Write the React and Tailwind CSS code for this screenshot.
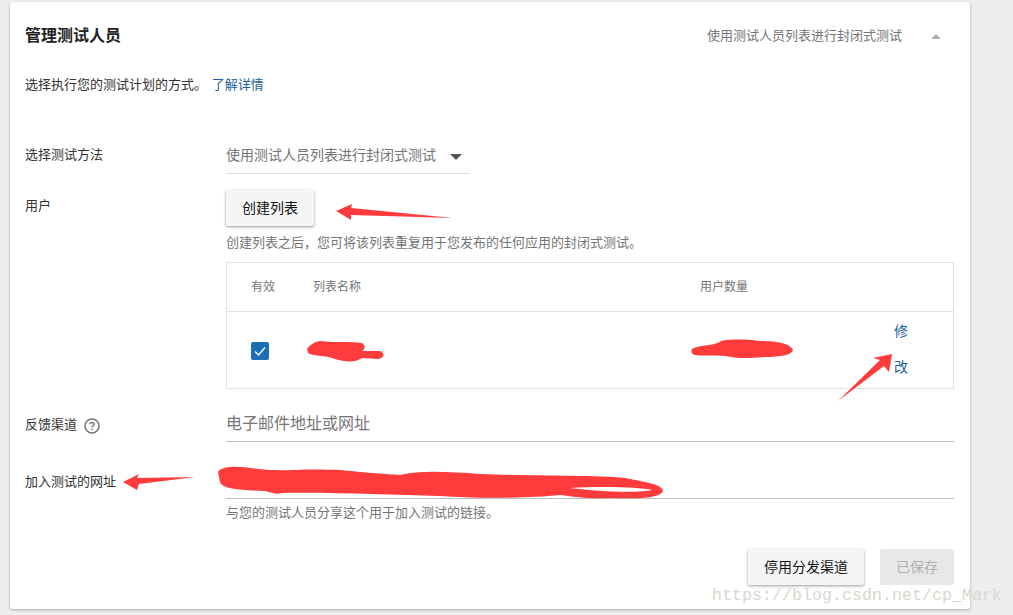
const cjk = { fontFamily: '"Liberation Sans", "Noto Sans CJK SC", sans-serif' }

function Label({ children, className = '' }) {
  return <div className={`w-[201px] shrink-0 text-[13px] text-[#333] ${className}`}>{children}</div>
}

function Marks() {
  return (
    <svg className="absolute left-0 top-0 pointer-events-none" width="1013" height="615" viewBox="0 0 1013 615">
      {/* arrows */}
      <path d="M336 211 L352 204 L351 208 L453 218 L351 215 L351 220 Z" fill="#ff3b3b" />
      <path d="M838 401 L880 360 L873 358 L892 354 L889 372 L884 366 Z" fill="#ff3b3b" />
      <path d="M123 482 L139 474 L137 478 L195 477 L139 484 L137 490 Z" fill="#ff3b3b" />
      {/* scribbles */}
      <path d="M307 349 C310 345 314 342 320 341 C335 343 350 341 362 343 C366 346 365 349 362 351 L380 351 C386 354 384 358 378 359 L362 358 C355 363 345 362 335 359 C325 355 312 356 308 353 Z" fill="#ff3b3b" />
      <path d="M692 349 C698 345 712 346 720 342 C722 339 745 339 760 341 C775 341 790 343 793 350 C792 355 780 357 765 357 C745 359 735 358 725 356 C712 355 700 356 695 355 C691 354 691 351 692 349 Z" fill="#ff3b3b" />
      <path d="M218 472 C222 465 240 466 258 469 C285 472 300 468 340 470 C370 473 385 474 400 475 C420 470 450 472 480 474 C530 476 590 475 625 478 C645 482 662 484 663 491 C660 498 640 499 610 498 C590 499 575 497 560 495 C530 498 480 499 440 496 C390 495 330 492 282 493 C275 495 270 492 265 491 C240 490 222 489 220 482 Z" fill="#ff3b3b" />
      <path d="M570 488 C600 486 640 487 652 490 C640 493 600 492 570 488 Z" fill="#ffffff" />
    </svg>
  )
}

export default function App() {
  return (
    <div className="relative w-[1013px] h-[615px] overflow-hidden bg-[#eeeeee]" style={cjk}>
      <div className="ml-[10px] mt-[2px] w-[960px] h-[607px] bg-white rounded-[2px] shadow-[0_1px_3px_rgba(0,0,0,0.3)] pl-[15px] pr-[16px] pt-[24px]">
        <div className="flex items-center justify-between h-[20px]">
          <h2 className="text-[16px] font-semibold text-[#222]">管理测试人员</h2>
          <div className="flex items-center">
            <span className="text-[13px] text-[#757575]">使用测试人员列表进行封闭式测试</span>
            <span className="ml-[29px] mr-[13px] w-0 h-0 border-x-[5px] border-x-transparent border-b-[5px] border-b-[#b0b0b0]" />
          </div>
        </div>

        <p className="mt-[29px] h-[20px] leading-[20px] text-[13px] text-[#333]">
          选择执行您的测试计划的方式。 <span className="ml-[1px] text-[#1c5f9c]">了解详情</span>
        </p>

        <div className="flex mt-[49px] h-[31px]">
          <Label className="pt-[1px] leading-[20px]">选择测试方法</Label>
          <div className="w-[244px] h-[30px] border-b border-[#e0e0e0] flex items-start pt-[1px] pr-[8px] justify-between">
            <span className="text-[14px] leading-[20px] text-[#757575]">使用测试人员列表进行封闭式测试</span>
            <span className="mt-[9px] w-0 h-0 border-x-[6px] border-x-transparent border-t-[6px] border-t-[#555]" />
          </div>
        </div>

        <div className="flex mt-[15px]">
          <Label className="pt-[6px] leading-[20px]">用户</Label>
          <div className="flex-1">
            <button className="w-[88px] h-[36px] rounded-[2px] bg-[#f5f5f5] text-[14px] text-[#111] shadow-[0_1px_3px_rgba(0,0,0,0.4)]">创建列表</button>
            <p className="mt-[7px] h-[20px] leading-[20px] text-[13px] text-[#757575]">创建列表之后，您可将该列表重复用于您发布的任何应用的封闭式测试。</p>
            <div className="mt-[9px] w-[728px] h-[127px] border border-[#e0e0e0]">
              <div className="flex items-center h-[49px] border-b border-[#e0e0e0] text-[12px] text-[#757575]">
                <span className="ml-[24px] w-[62px]">有效</span>
                <span className="w-[387px]">列表名称</span>
                <span>用户数量</span>
              </div>
              <div className="relative flex items-center h-[76px]">
                <span className="ml-[24px] mt-[2px] w-[18px] h-[18px] rounded-[2px] bg-[#1a6fb5] flex items-center justify-center">
                  <svg width="12" height="12" viewBox="0 0 12 12" fill="none" stroke="white" strokeWidth="1.4">
                    <path d="M1 6.5 L4.5 10 L11 2.5" />
                  </svg>
                </span>
                <div className="ml-auto mr-[45px] mb-[2px] w-[14px] text-[14px] leading-[36px] text-[#1c5f9c]">修改</div>
              </div>
            </div>
          </div>
        </div>

        <div className="flex mt-[18px] h-[35px]">
          <Label className="flex items-center h-[36px]">
            反馈渠道
            <svg className="ml-[7px] mt-[2px]" width="16" height="16" viewBox="0 0 16 16" fill="none" stroke="#757575" strokeWidth="1.5">
              <circle cx="8" cy="8" r="7" />
              <path d="M5.9 6.3 C5.9 3.8 10.1 3.8 10.1 6.2 C10.1 7.8 8 7.7 8 9.6" />
              <path d="M8 10.7 V12.2" />
            </svg>
          </Label>
          <div className="w-[728px] h-[35px] border-b border-[#bdbdbd] text-[16px] leading-[33px] text-[#757575]">电子邮件地址或网址</div>
        </div>

        <div className="flex mt-[22px]">
          <Label className="pt-[8px] leading-[20px]">加入测试的网址</Label>
          <div className="w-[728px]">
            <div className="h-[35px] border-b border-[#bdbdbd]" />
            <p className="mt-[4px] h-[20px] leading-[20px] text-[13px] text-[#757575]">与您的测试人员分享这个用于加入测试的链接。</p>
          </div>
        </div>

        <div className="flex justify-end gap-[16px] mt-[26px]">
          <button className="w-[116px] h-[36px] rounded-[2px] bg-[#f5f5f5] text-[14px] text-[#111] shadow-[0_1px_3px_rgba(0,0,0,0.4)]">停用分发渠道</button>
          <button className="w-[74px] h-[36px] rounded-[2px] bg-[#e8e8e8] text-[14px] text-[#b0b0b0]">已保存</button>
        </div>
      </div>

      <Marks />
      <span className="absolute left-[712px] top-[586px] text-[16.67px] leading-[20px] text-[#d8d8d0]" style={{ fontFamily: '"Liberation Mono", monospace' }}>https://blog.csdn.net/cp_Mark</span>
    </div>
  )
}
